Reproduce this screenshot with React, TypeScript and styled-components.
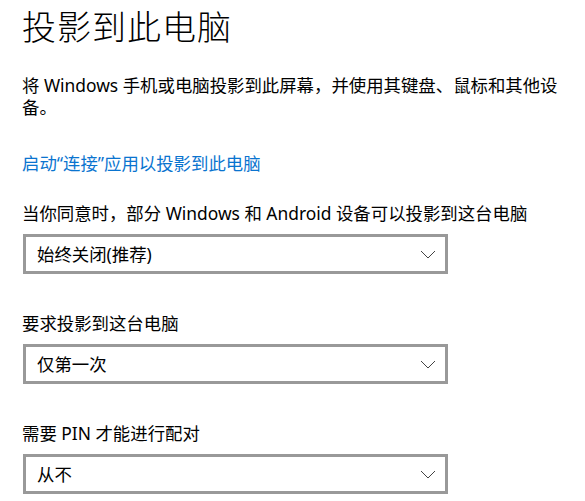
import styled, { createGlobalStyle } from "styled-components";

const GlobalStyle = createGlobalStyle`
    html, body {
        margin: 0;
        padding: 0;
        background: #ffffff;
    }
    body {
        font-family: "Noto Sans", "Noto Sans CJK SC", sans-serif;
        color: #000000;
    }
`

type Option = { label: string; value: string };

// 드롭다운 한 묶음
const settings: Option[] = [
    { label: "当你同意时，部分 Windows 和 Android 设备可以投影到这台电脑", value: "始终关闭(推荐)" },
    { label: "要求投影到这台电脑", value: "仅第一次" },
    { label: "需要 PIN 才能进行配对", value: "从不" },
];

function Chevron() {
    return (
        <svg width="16" height="9" viewBox="0 0 16 9">
            <polyline points="1,1 8,8 15,1" fill="none" stroke="#444" strokeWidth="1" />
        </svg>
    )
}

export default function App() {
    return (
        <Page>
            <GlobalStyle />
            <Title>投影到此电脑</Title>
            <Description>将 Windows 手机或电脑投影到此屏幕，并使用其键盘、鼠标和其他设备。</Description>
            <Link>启动“连接”应用以投影到此电脑</Link>
            {settings.map((s) => (
                <Setting key={s.label}>
                    <Label>{s.label}</Label>
                    <Select>
                        <SelectValue>{s.value}</SelectValue>
                        <Chevron />
                    </Select>
                </Setting>
            ))}
        </Page>
    )
}

// styled components
const Page = styled.div`
    width: 540px;
    padding: 4px 0 0 22px;
`

const Title = styled.h1`
    margin: 0;
    font-size: 34px;
    font-weight: 300;
    line-height: 46px;
    letter-spacing: 1px;
`

const Description = styled.p`
    margin: 24px 0 0;
    font-size: 17.4px;
    line-height: 22px;
`

const Link = styled.a`
    display: block;
    margin-top: 34px;
    font-size: 17.4px;
    line-height: 22px;
    color: #0a74cf;
    cursor: pointer;
`

const Setting = styled.div`
    margin-top: 28px;
    & + & {
        margin-top: 38px;
    }
`

const Label = styled.div`
    font-size: 17.4px;
    line-height: 22px;
`

const Select = styled.div`
    box-sizing: border-box;
    width: 425px;
    height: 40px;
    margin: 10px 0 0 1px;
    border: 3px solid #999999;
    padding: 0 9px 0 11px;
    display: flex;
    align-items: center;
    justify-content: space-between;
`

const SelectValue = styled.span`
    font-size: 17.4px;
    line-height: 22px;
`
